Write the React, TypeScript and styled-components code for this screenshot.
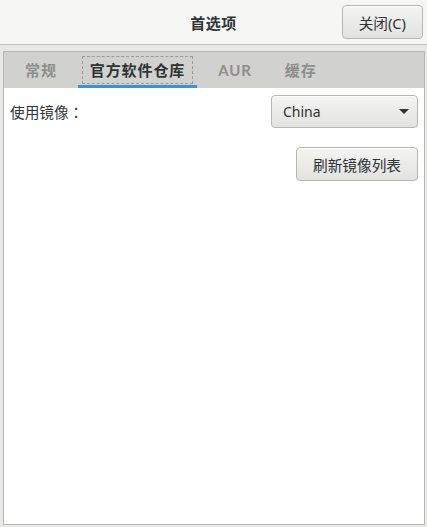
import React, { FC, useState } from 'react'
import styled, { createGlobalStyle, css } from 'styled-components'

const GlobalStyle = createGlobalStyle`
  html, body {
    margin: 0;
    padding: 0;
    background: #e8e8e7;
  }
  body {
    font-family: 'Noto Sans', 'Noto Sans CJK SC', sans-serif;
    color: #2e3436;
  }
`

const tabs = ['常规', '官方软件仓库', 'AUR', '缓存']

const App: FC = () => {
  const [active, setActive] = useState(1)

  return (
    <>
      <GlobalStyle />
      <Window>
        <HeaderBar>
          <span />
          <Title>首选项</Title>
          <HeaderEnd>
            <Button>关闭(C)</Button>
          </HeaderEnd>
        </HeaderBar>

        <Body>
          <Notebook>
            <TabBar>
              {tabs.map((label, i) => (
                <Tab key={label} active={i === active} onClick={() => setActive(i)}>
                  <TabLabel active={i === active}>{label}</TabLabel>
                </Tab>
              ))}
            </TabBar>

            <Page>
              <Row>
                <Label>使用镜像：</Label>
                <Combo>
                  <span>China</span>
                  <Arrow viewBox="0 0 10 5" width="10" height="5">
                    <path d="M0 0 L10 0 L5 5 Z" fill="#2e3436" />
                  </Arrow>
                </Combo>
              </Row>
              <ActionRow>
                <Button>刷新镜像列表</Button>
              </ActionRow>
            </Page>
          </Notebook>
        </Body>
      </Window>
    </>
  )
}

export default App

const Window = styled.div`
  width: 427px;
  height: 527px;
  display: flex;
  flex-direction: column;
  background: #e8e8e7;
`

const HeaderBar = styled.header`
  height: 44px;
  display: grid;
  grid-template-columns: 1fr auto 1fr;
  align-items: start;
  background: #f6f6f5;
  border-bottom: 1px solid #c4c4c1;
`

const Title = styled.div`
  align-self: center;
  font-size: 15px;
  font-weight: 700;
  letter-spacing: 0.5px;
  color: #2e3436;
`

const HeaderEnd = styled.div`
  display: flex;
  justify-content: flex-end;
  padding: 5px 4px 0 0;
`

const Button = styled.button`
  height: 34px;
  padding: 0 16px;
  border: 1px solid #b6b6b3;
  border-radius: 4px;
  background: linear-gradient(to bottom, #f4f4f3, #e2e2e0);
  box-shadow: inset 0 1px #ffffff;
  font-family: 'Noto Sans', 'Noto Sans CJK SC', sans-serif;
  font-size: 14.67px;
  color: #2e3436;
  cursor: pointer;
`

const Body = styled.div`
  flex: 1;
  display: flex;
  padding: 6px 2px 2px 3px;
`

const Notebook = styled.section`
  flex: 1;
  display: flex;
  flex-direction: column;
  border: 1px solid #b6b6b3;
  background: #ffffff;
`

const TabBar = styled.nav`
  display: flex;
  gap: 9px;
  padding-left: 9px;
  background: #d1d1cf;
`

const Tab = styled.div<{ active: boolean }>`
  padding: 4px 4px 1px;
  border-bottom: 3px solid transparent;
  cursor: pointer;

  ${({ active }) =>
    active &&
    css`
      border-bottom-color: #3f8ede;
    `}
`

const TabLabel = styled.span<{ active: boolean }>`
  display: block;
  height: 26px;
  line-height: 26px;
  padding: 0 7px;
  border: 1px dashed transparent;
  font-family: Lato, 'Noto Sans CJK SC', sans-serif;
  font-size: 15px;
  font-weight: 700;
  letter-spacing: 0.9px;
  color: #8d8f8a;

  ${({ active }) =>
    active &&
    css`
      color: #2e3436;
      border-color: #9a9a98;
    `}
`

const Page = styled.div`
  flex: 1;
  display: flex;
  flex-direction: column;
  gap: 19px;
  padding: 7px 6px 0 6px;
`

const Row = styled.div`
  display: flex;
  align-items: center;
  justify-content: space-between;
`

const Label = styled.span`
  font-family: 'Noto Sans CJK TC', sans-serif;
  font-size: 14.67px;
  color: #2e3436;
`

const Combo = styled.div`
  width: 147px;
  height: 33px;
  box-sizing: border-box;
  display: flex;
  align-items: center;
  justify-content: space-between;
  padding: 0 8px 0 11px;
  border: 1px solid #b6b6b3;
  border-radius: 4px;
  background: linear-gradient(to bottom, #f4f4f3, #e2e2e0);
  box-shadow: inset 0 1px #ffffff;
  font-size: 14px;
  color: #2e3436;
`

const Arrow = styled.svg`
  display: block;
`

const ActionRow = styled.div`
  display: flex;
  justify-content: flex-end;
`
